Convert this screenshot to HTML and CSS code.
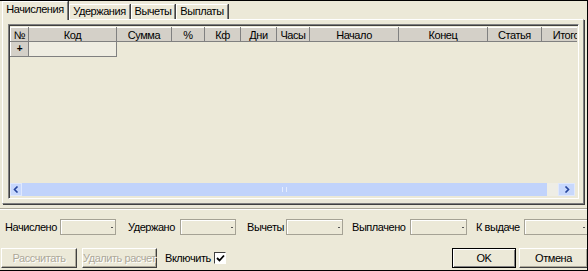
FILE: index.html
```html
<!DOCTYPE html>
<html lang="ru">
<head>
  <meta charset="UTF-8" />
  <title>Начисления</title>
  <link rel="stylesheet" href="styles.css">
</head>
<body>

  <div class="window">

    <!-- Вкладки -->
    <div class="tabs">
      <div class="tab tab-1 active">Начисления</div>
      <div class="tab tab-2">Удержания</div>
      <div class="tab tab-3">Вычеты</div>
      <div class="tab tab-4">Выплаты</div>
    </div>

    <!-- Панель с таблицей -->
    <div class="panel">
      <div class="grid">
        <div class="table-wrap">
          <table>
            <colgroup>
              <col class="c-num"><col class="c-code"><col class="c-sum"><col class="c-pct">
              <col class="c-kf"><col class="c-days"><col class="c-hours"><col class="c-start">
              <col class="c-end"><col class="c-item"><col class="c-total">
            </colgroup>
            <thead>
              <tr>
                <th>№</th><th>Код</th><th>Сумма</th><th>%</th><th>Кф</th><th>Дни</th>
                <th>Часы</th><th>Начало</th><th>Конец</th><th>Статья</th><th>Итого</th>
              </tr>
            </thead>
            <tbody>
              <tr>
                <td class="row-head">+</td><td class="cell"></td>
                <td></td><td></td><td></td><td></td><td></td><td></td><td></td><td></td><td></td>
              </tr>
            </tbody>
          </table>
        </div>

        <!-- Горизонтальная прокрутка -->
        <div class="hscroll">
          <div class="arrow arrow-left">
            <svg width="6" height="7" viewBox="0 0 6 7"><path d="M4.5 0.5 L1.5 3.5 L4.5 6.5" fill="none" stroke="#26459c" stroke-width="1.6"/></svg>
          </div>
          <div class="thumb"><span class="grip"></span></div>
          <div class="track"></div>
          <div class="arrow arrow-right">
            <svg width="6" height="7" viewBox="0 0 6 7"><path d="M1.5 0.5 L4.5 3.5 L1.5 6.5" fill="none" stroke="#26459c" stroke-width="1.6"/></svg>
          </div>
        </div>
      </div>
    </div>

    <div class="sep"></div>

    <!-- Итоги -->
    <div class="totals">
      <label class="lbl lbl-1">Начислено</label><div class="field"></div>
      <label class="lbl lbl-2">Удержано</label><div class="field"></div>
      <label class="lbl lbl-3">Вычеты</label><div class="field"></div>
      <label class="lbl lbl-4">Выплачено</label><div class="field"></div>
      <label class="lbl lbl-5">К выдаче</label><div class="field"></div>
    </div>

    <!-- Кнопки -->
    <div class="actions">
      <button class="btn btn-calc" disabled>Рассчитать</button>
      <button class="btn btn-del" disabled>Удалить расчет</button>
      <span class="check-label">Включить</span>
      <span class="checkbox">
        <svg width="9" height="9" viewBox="0 0 9 9"><path d="M1 4 L3.5 6.5 L8 1.5" fill="none" stroke="#000" stroke-width="1.8"/></svg>
      </span>
      <span class="spacer"></span>
      <button class="btn btn-ok default">OK</button>
      <button class="btn btn-cancel">Отмена</button>
    </div>

  </div>

</body>
</html>
```

FILE: styles.css
```css
* {
  box-sizing: border-box;
  margin: 0;
  padding: 0;
}

body {
  background: #ece9d8;
  font-family: 'Liberation Sans', Arial, sans-serif;
  font-size: 11px;
  letter-spacing: -0.45px;
  color: #000;
}

/* Окно */
.window {
  width: 588px;
  height: 271px;
  border-top: 1px solid #000;
  border-right: 1px solid #000;
  border-bottom: 1px solid #000;
  background: #ece9d8;
  display: flex;
  flex-direction: column;
  overflow: hidden;
}

/* Вкладки */
.tabs {
  display: flex;
  align-items: flex-end;
  height: 18px;
  padding-left: 2px;
  position: relative;
  z-index: 2;
}

.tab {
  height: 15px;
  line-height: 13px;
  text-align: center;
  white-space: nowrap;
  background: #ece9d8;
  border-top: 1px solid #fff;
  border-left: 1px solid #fff;
  border-right: 1px solid #808080;
  box-shadow: 1px 0 0 #404040;
}

.tab.active {
  height: 19px;
  line-height: 15px;
  margin-bottom: -1px;
  position: relative;
  z-index: 3;
}

.tab-1 { width: 66px; }
.tab-2 { width: 61px; margin-left: 1px; }
.tab-3 { width: 44px; margin-left: 1px; }
.tab-4 { width: 52px; margin-left: 1px; }

.panel {
  height: 185px;
  margin: 0 3px 0 2px;
  border-top: 1px solid #fff;
  border-left: 1px solid #fff;
  border-right: 1px solid #808080;
  border-bottom: 1px solid #808080;
  box-shadow: 1px 1px 0 #404040;
  padding: 4px 4px 4px 5px;
}

/* Таблица */
.grid {
  height: 100%;
  border-top: 1px solid #808080;
  border-left: 1px solid #808080;
  border-right: 1px solid #fff;
  border-bottom: 1px solid #fff;
  box-shadow: inset 1px 1px 0 #404040;
  display: flex;
  flex-direction: column;
  padding: 2px 1px 2px 1px;
}

.table-wrap {
  flex: 1;
  overflow: hidden;
}

table {
  border-collapse: collapse;
  table-layout: fixed;
  width: 580px;
}

.c-num { width: 18px; }
.c-code { width: 88px; }
.c-sum { width: 55px; }
.c-pct { width: 33px; }
.c-kf { width: 36px; }
.c-days { width: 36px; }
.c-hours { width: 33px; }
.c-start { width: 89px; }
.c-end { width: 89px; }
.c-item { width: 54px; }
.c-total { width: 49px; }

th {
  height: 14px;
  font-weight: normal;
  background: #d4d0c8;
  border-right: 1px solid #808080;
  border-bottom: 1px solid #808080;
  border-top: 1px solid #fff;
  text-align: center;
  white-space: nowrap;
  overflow: hidden;
  line-height: 12px;
}

th:first-child {
  border-left: 1px solid #fff;
}

td {
  height: 15px;
  padding: 0;
}

td.row-head {
  background: #d4d0c8;
  border-left: 1px solid #fff;
  border-right: 1px solid #808080;
  border-bottom: 1px solid #808080;
  text-align: center;
  font-weight: bold;
  font-size: 10px;
  line-height: 10px;
}

td.cell {
  background: #efede2;
  border-right: 1px solid #808080;
  border-bottom: 1px solid #808080;
}

/* Прокрутка */
.hscroll {
  height: 13px;
  display: flex;
  margin-right: 2px;
}

.arrow {
  display: flex;
  align-items: center;
  justify-content: center;
  background: #c8d8fc;
  border: 1px solid #dfe8fd;
}

.arrow-left { width: 12px; }
.arrow-right { width: 17px; }

.thumb {
  flex: 1;
  background: #c1d3fb;
  display: flex;
  align-items: center;
  justify-content: center;
}

.grip {
  width: 5px;
  height: 5px;
  border-left: 1px solid #e4ecfe;
  border-right: 1px solid #e4ecfe;
}

.track {
  width: 11px;
  background: #eeede5;
}

.sep {
  margin-top: 4px;
  height: 2px;
  border-top: 1px solid #aca899;
  border-bottom: 1px solid #fff;
}

/* Итоги */
.totals {
  margin-top: 9px;
  height: 16px;
  display: grid;
  grid-template-columns: 60px 56px 64px 56px 50px 57px 67px 57px 57px 64px;
  align-items: center;
}

.lbl {
  padding-left: 11px;
  white-space: nowrap;
}

.lbl-1 { padding-left: 5px; }
.lbl-2 { padding-left: 12px; }
.lbl-4 { padding-left: 9px; }
.lbl-5 { padding-left: 9px; }

.field {
  height: 16px;
  border: 1px solid #a5a295;
  box-shadow: inset 1px 1px 0 #fff;
  position: relative;
}

.field::after {
  content: "";
  position: absolute;
  right: 2px;
  top: 7px;
  width: 2px;
  height: 1px;
  background: #555;
}

/* Кнопки */
.actions {
  margin-top: 13px;
  height: 20px;
  display: flex;
  align-items: center;
}

.btn {
  height: 20px;
  padding: 0;
  white-space: nowrap;
  font-family: inherit;
  font-size: 11px;
  letter-spacing: -0.45px;
  background: #ece9d8;
  color: #000;
  border-top: 1px solid #fff;
  border-left: 1px solid #fff;
  border-right: 1px solid #404040;
  border-bottom: 1px solid #404040;
  box-shadow: inset -1px -1px 0 #aca899;
}

.btn:disabled {
  color: #aca899;
  text-shadow: 1px 1px 0 #fff;
}

.btn-calc { width: 76px; margin-left: 1px; }
.btn-del { width: 75px; margin-left: 5px; }

.check-label {
  flex-shrink: 0;
  width: 55px;
  padding-left: 8px;
  white-space: nowrap;
}

.checkbox {
  flex-shrink: 0;
  width: 12px;
  height: 12px;
  margin-left: 2px;
  background: #fff;
  border-top: 1px solid #404040;
  border-left: 1px solid #404040;
  border-right: 1px solid #fff;
  border-bottom: 1px solid #fff;
  display: flex;
  align-items: center;
  justify-content: center;
}

.spacer {
  flex: 1;
}

.btn-ok {
  width: 64px;
}

.btn.default {
  border: 1px solid #000;
  box-shadow: inset 1px 1px 0 #fff, inset -1px -1px 0 #808080;
}

.btn-cancel {
  width: 69px;
  margin-left: 3px;
  margin-right: -1px;
}
```
